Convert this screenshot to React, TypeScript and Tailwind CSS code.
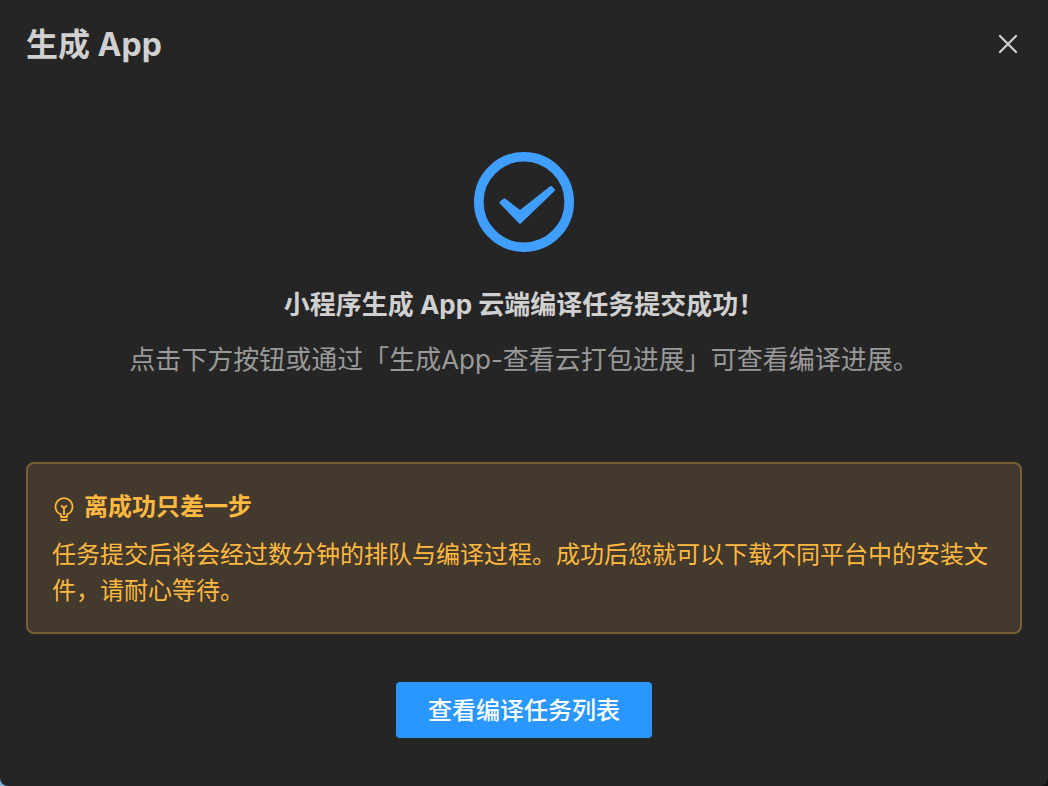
import React from 'react';

const CloseIcon: React.FC = () => (
  <svg className="h-5 w-5" viewBox="0 0 20 20" fill="none" stroke="currentColor" strokeWidth="2.2" strokeLinecap="round" aria-hidden="true">
    <path d="M2 2l16 16M18 2L2 18" />
  </svg>
);

const SuccessIcon: React.FC = () => (
  <svg className="h-[100px] w-[100px] text-[#409eff]" viewBox="0 0 100 100" fill="none" aria-hidden="true">
    <circle cx="50" cy="50" r="45.2" stroke="currentColor" strokeWidth="9.6" />
    <path
      d="M27 50.500L30.500 48L46 60L77 35.500L79.500 38L46 70.200Z"
      fill="currentColor"
      stroke="currentColor"
      strokeWidth="3"
      strokeLinejoin="round"
    />
  </svg>
);

const BulbIcon: React.FC = () => (
  <svg className="h-6 w-6 shrink-0" viewBox="0 0 24 24" fill="none" stroke="currentColor" strokeWidth="1.8" strokeLinejoin="round" aria-hidden="true">
    <path d="M9 20v-2.6C5.700 16.200 3.500 13.300 3.500 9.700a8.500 8.500 0 0 1 17 0c0 3.600-2.200 6.500-5.500 7.700V20z" />
    <path d="M9 8.500l3 2.500 3-2.500M12 11v7" />
    <path d="M8.500 23h7" strokeWidth="2" />
  </svg>
);

const Notice: React.FC = () => (
  <section className="rounded-lg border-2 border-[#7a5f35] bg-[#43392c] px-6 pt-[25px] pb-[23px] text-2xl leading-9 text-[#ffb940]">
    <h3 className="flex items-end gap-2 font-bold">
      <span className="pb-1">
        <BulbIcon />
      </span>
      离成功只差一步
    </h3>
    <p className="mt-3">
      任务提交后将会经过数分钟的排队与编译过程。成功后您就可以下载不同平台中的安装文件，请耐心等待。
    </p>
  </section>
);

export default function App() {
  return (
    <div className="min-h-screen bg-linear-to-r from-[#7db4d2] to-[#111111] font-['Inter','Noto_Sans_CJK_SC',sans-serif]">
      <main lang="zh-CN" className="flex min-h-screen flex-col rounded-b-lg bg-[#252525] px-[26px] text-[#d0d0d0]">
        <header className="flex items-start justify-between pt-5">
          <h1 className="text-[32px] leading-[50px] font-bold">生成 App</h1>
          <button type="button" aria-label="关闭" className="mt-2.5 p-1">
            <CloseIcon />
          </button>
        </header>

        <div className="flex flex-col items-center pt-[82px] text-center text-[26px] leading-10">
          <SuccessIcon />
          <h2 className="mt-[33px] font-bold">小程序生成 App 云端编译任务提交成功！</h2>
          <p className="mt-[15px] text-[#999999]">点击下方按钮或通过「生成App-查看云打包进展」可查看编译进展。</p>
        </div>

        <div className="mt-[82px]">
          <Notice />
        </div>

        <footer className="flex justify-center pt-12 pb-12">
          <button type="button" className="h-14 rounded bg-[#2997ff] px-8 pt-0.5 text-2xl font-medium text-white">
            查看编译任务列表
          </button>
        </footer>
      </main>
    </div>
  );
}
